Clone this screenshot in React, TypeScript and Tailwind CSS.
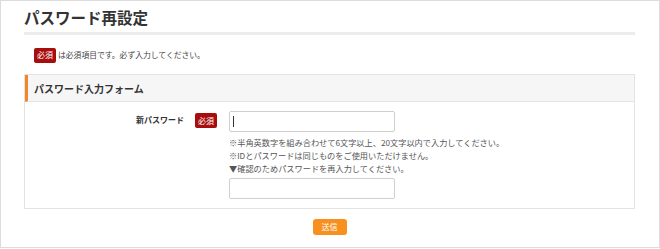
import React from 'react';

const FONT = '"Noto Sans CJK JP", "Noto Sans", sans-serif';

function RequiredBadge() {
    return (
        <span className="inline-flex items-center justify-center w-[22px] h-[15px] bg-[#a80d0d] text-white text-[8px] leading-none rounded-[2px]">必須</span>
    );
}

export default function App() {
    return (
        <div className="w-[660px] h-[249px] bg-white" style={{ fontFamily: FONT }}>
            <div className="h-[248px] border border-[#dcdcdc] pl-[23px] pr-[24px] flex flex-col">
                {/* Title */}
                <h1 className="mt-[3px] text-[15.5px] leading-[26px] font-bold text-[#333]">パスワード再設定</h1>
                <div className="mt-[2px] h-[3px] bg-[#ececec]" />

                {/* Notice */}
                <div className="mt-[12px] flex items-center pl-[10px] h-[16px]">
                    <RequiredBadge />
                    <span className="ml-[2px] text-[7.8px] text-[#444]">は必須項目です。必ず入力してください。</span>
                </div>

                {/* Form box */}
                <div className="mt-[11px] border border-[#e3e3e3]">
                    <div className="h-[27px] bg-[#f6f6f6] border-l-[3px] border-[#f0882a] border-b border-b-[#e3e3e3] flex items-center pl-[6px]">
                        <span className="text-[10px] font-bold text-[#333]">パスワード入力フォーム</span>
                    </div>
                    <div className="flex pt-[9px] pb-[9px]">
                        <div className="w-[159px] text-right pt-[3px] text-[8px] leading-[12px] font-bold text-[#333]">新パスワード</div>
                        <div className="w-[45px] pl-[11px] pt-[2px] flex items-start">
                            <RequiredBadge />
                        </div>
                        <div className="flex flex-col">
                            <div className="relative">
                                <input
                                    type="text"
                                    className="block w-[166px] h-[21px] border border-[#cfcfcf] rounded-[2px] px-[4px] text-[11px] outline-none"
                                    defaultValue=""
                                />
                                {/* caret */}
                                <span className="absolute left-[4px] top-[5px] w-px h-[11px] bg-[#333]" />
                            </div>
                            <div className="mt-[4px] text-[8.2px] leading-[13px] text-[#555]">
                                <p>※半角英数字を組み合わせて6文字以上、20文字以内で入力してください。</p>
                                <p>※IDとパスワードは同じものをご使用いただけません。</p>
                                <p>▼確認のためパスワードを再入力してください。</p>
                            </div>
                            <input
                                type="text"
                                className="block mt-[3px] w-[166px] h-[21px] border border-[#cfcfcf] rounded-[2px] px-[4px] text-[11px] outline-none"
                                defaultValue=""
                            />
                        </div>
                    </div>
                </div>

                {/* Submit */}
                <div className="mt-[10px] flex justify-center">
                    <button className="w-[34px] h-[16px] bg-[#f7901e] text-white text-[8px] leading-none rounded-[3px]">送信</button>
                </div>
            </div>
        </div>
    );
}
